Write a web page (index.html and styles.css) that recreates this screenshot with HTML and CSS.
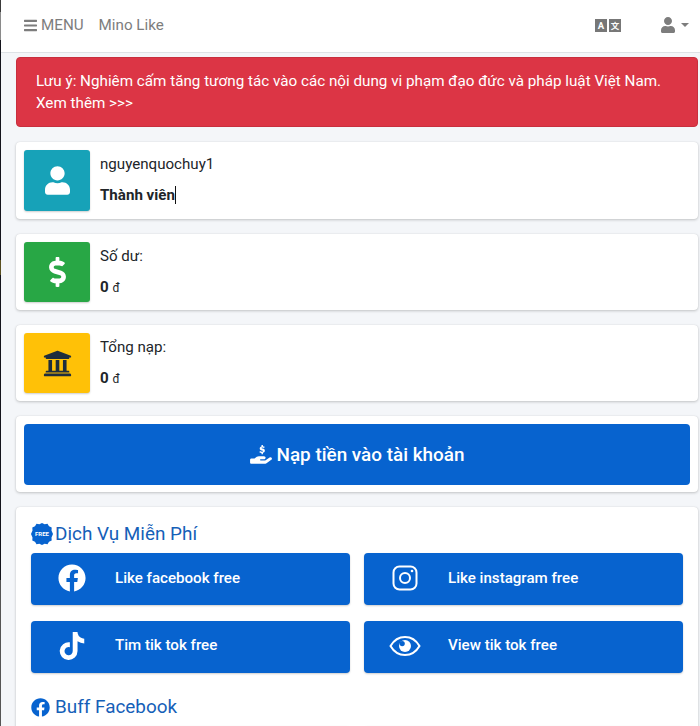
FILE: index.html
```html
<!DOCTYPE html>
<html lang="vi">
<head>
<meta charset="utf-8">
<title>Mino Like</title>
<link rel="stylesheet" href="styles.css">
</head>
<body>
<div class="page">
<nav class="navbar">
  <a class="nav-link menu"><svg class="i-bars" viewBox="0 0 448 512"><path fill="currentColor" d="M16 132h416c8.800 0 16-7.200 16-16V76c0-8.800-7.200-16-16-16H16C7.200 60 0 67.200 0 76v40c0 8.800 7.200 16 16 16zm0 160h416c8.800 0 16-7.200 16-16v-40c0-8.800-7.200-16-16-16H16c-8.800 0-16 7.200-16 16v40c0 8.800 7.200 16 16 16zm0 160h416c8.800 0 16-7.200 16-16v-40c0-8.800-7.200-16-16-16H16c-8.800 0-16 7.200-16 16v40c0 8.800 7.200 16 16 16z"/></svg> MENU</a>
  <a class="nav-link brand">Mino Like</a>
  <span class="spacer"></span>
  <span class="lang" aria-label="Language"><span class="lang-a">A</span><span class="lang-b">文</span></span>
  <a class="user-menu"><svg class="i-user-nav" viewBox="0 0 448 512"><path fill="currentColor" d="M224 256c70.700 0 128-57.300 128-128S294.700 0 224 0 96 57.300 96 128s57.300 128 128 128zm89.600 32h-16.700c-22.200 10.200-46.900 16-72.900 16s-50.600-5.800-72.900-16h-16.700C60.200 288 0 348.200 0 422.400V464c0 26.500 21.500 48 48 48h352c26.500 0 48-21.500 48-48v-41.600c0-74.200-60.200-134.400-134.400-134.400z"/></svg><span class="caret"></span></a>
</nav>
<main class="content">
  <div class="alert">Lưu ý: Nghiêm cấm tăng tương tác vào các nội dung vi phạm đạo đức và pháp luật Việt Nam.<br>Xem thêm &gt;&gt;&gt;</div>

  <section class="info-box">
    <div class="info-icon teal"><svg class="i-user" viewBox="0 0 448 512"><path fill="currentColor" d="M224 256c70.700 0 128-57.300 128-128S294.700 0 224 0 96 57.300 96 128s57.300 128 128 128zm89.600 32h-16.700c-22.200 10.200-46.900 16-72.900 16s-50.600-5.800-72.900-16h-16.700C60.200 288 0 348.200 0 422.400V464c0 26.500 21.500 48 48 48h352c26.500 0 48-21.500 48-48v-41.600c0-74.200-60.200-134.400-134.400-134.400z"/></svg></div>
    <div class="info-text"><span class="label">nguyenquochuy1</span><span class="value role">Thành viên<i class="cursor"></i></span></div>
  </section>

  <section class="info-box">
    <div class="info-icon green"><svg class="i-dollar" viewBox="0 0 288 512"><path fill="currentColor" d="M209.200 233.400l-108-31.600C88.700 198.200 80 186.500 80 173.500c0-16.300 13.200-29.500 29.500-29.500h66.300c12.200 0 24.200 3.700 34.200 10.500 6.100 4.100 14.300 3.100 19.500-2l34.800-34c7.100-6.900 6.100-18.400-1.800-24.500C238 74.800 207.400 64.100 176 64V16c0-8.800-7.200-16-16-16h-32c-8.800 0-16 7.200-16 16v48h-2.500C45.800 64-5.400 118.700.5 183.600c4.200 46.100 39.400 83.600 83.800 96.600l102.500 30c12.500 3.700 21.200 15.300 21.200 28.300 0 16.300-13.200 29.500-29.500 29.500h-66.300C100 368 88 364.300 78 357.500c-6.100-4.100-14.300-3.100-19.500 2l-34.800 34c-7.100 6.900-6.100 18.400 1.800 24.500 24.500 19.200 55.100 29.900 86.500 30v48c0 8.800 7.200 16 16 16h32c8.800 0 16-7.200 16-16v-48.200c46.600-.9 90.300-28.600 105.700-72.700 21.500-61.600-14.600-124.800-72.500-141.700z"/></svg></div>
    <div class="info-text"><span class="label">Số dư:</span><span class="value"><b>0</b> <small>đ</small></span></div>
  </section>

  <section class="info-box">
    <div class="info-icon yellow"><svg class="i-bank" viewBox="0 0 512 512"><path fill="currentColor" d="M496 128v16a8 8 0 0 1-8 8h-24v12c0 6.600-5.400 12-12 12H60c-6.600 0-12-5.400-12-12v-12H24a8 8 0 0 1-8-8v-16a8 8 0 0 1 4.900-7.400l232-88a8 8 0 0 1 6.200 0l232 88A8 8 0 0 1 496 128zm-24 304H40c-13.300 0-24 10.700-24 24v16a8 8 0 0 0 8 8h464a8 8 0 0 0 8-8v-16c0-13.300-10.700-24-24-24zM96 192v192H60c-6.600 0-12 5.400-12 12v20h416v-20c0-6.600-5.400-12-12-12h-36V192h-64v192h-64V192h-64v192h-64V192H96z"/></svg></div>
    <div class="info-text"><span class="label">Tổng nạp:</span><span class="value"><b>0</b> <small>đ</small></span></div>
  </section>

  <section class="card deposit-card">
    <a class="deposit"><svg class="i-hand" viewBox="0 0 32 28"><path fill="currentColor" d="M0 21c0-1.200.8-2 1.800-2h4.400l3.200-2.400c.9-.7 2-1 3-1h7.100c1.300 0 2.300 1 2.300 2.200s-1 2.200-2.300 2.200h-4.700c-.5 0-.9.400-.9.800s.4.800.9.800h6.400l6.100-4.200c1-.7 2.200-.5 2.900.4.700 1 .5 2.300-.5 3l-6.700 4.700c-.9.600-1.900.9-3 .9H1.800C.8 26.400 0 25.500 0 24.400zM16 0h2v1.700c1 .1 1.800.4 2.500.8l-.8 1.800c-.8-.5-1.700-.8-2.500-.8-.6 0-1 .2-1 .6s.4.600 1.600.9c1.800.5 2.900 1.300 2.900 2.900 0 1.500-1 2.500-2.700 2.900V13h-2v-1.700c-1.100-.1-2.200-.5-3-1.100l.9-1.800c.9.600 1.900 1 2.800 1 .8 0 1.200-.2 1.200-.7 0-.4-.4-.6-1.600-1-1.900-.5-2.800-1.300-2.800-2.800 0-1.400 1-2.400 2.500-2.700z"/></svg> Nạp tiền vào tài khoản</a>
  </section>

  <section class="card services">
    <h2 class="section-title"><svg class="i-free" viewBox="0 0 24 24"><path fill="currentColor" d="M12 1l2.600 1.300 2.900-.5 1.500 2.500 2.700 1.200-.2 2.900L23 12l-1.500 3.600.2 2.900-2.700 1.200-1.500 2.500-2.900-.5L12 23l-2.600-1.300-2.900.5L5 19.700l-2.700-1.200.2-2.900L1 12l1.500-3.600-.2-2.900L5 4.300l1.500-2.500 2.900.5z"/><text class="free-text" x="12" y="14.200" text-anchor="middle">FREE</text></svg>Dịch Vụ Miễn Phí</h2>
    <div class="svc-grid">
      <a class="svc"><span class="svc-icon"><svg class="i-28" viewBox="0 0 512 512"><path fill="currentColor" d="M504 256C504 119 393 8 256 8S8 119 8 256c0 123.780 90.690 226.380 209.250 245V327.690h-63V256h63v-54.640c0-62.150 37-96.480 93.670-96.480 27.140 0 55.520 4.840 55.520 4.840v61h-31.280c-30.800 0-40.410 19.120-40.410 38.730V256h68.780l-11 71.690h-57.780V501C413.310 482.380 504 379.780 504 256z"/></svg></span>Like facebook free</a>
      <a class="svc"><span class="svc-icon"><svg class="i-28" viewBox="0 0 28 28"><g fill="none" stroke="currentColor"><rect x="2.500" y="2.500" width="23" height="23" rx="6" stroke-width="2"/><circle cx="14" cy="14" r="5" stroke-width="2"/></g><circle cx="21" cy="7" r="1.300" fill="currentColor"/></svg></span>Like instagram free</a>
      <a class="svc"><span class="svc-icon"><svg class="i-28" viewBox="0 0 448 512"><path fill="currentColor" d="M448 209.910a210.060 210.060 0 0 1-122.770-39.250V349.380A162.550 162.550 0 1 1 185 188.310V278.200a74.620 74.620 0 1 0 52.230 71.180V0l88 0a121.180 121.180 0 0 0 1.860 22.170h0A122.180 122.180 0 0 0 381 102.390a121.430 121.430 0 0 0 67 20.140z"/></svg></span>Tim tik tok free</a>
      <a class="svc"><span class="svc-icon"><svg class="i-eye" viewBox="0 0 32 22"><path fill="none" stroke="currentColor" stroke-width="2" d="M1.500 11C5 5 10 2 16 2s11 3 14.500 9C27 17 22 20 16 20S5 17 1.500 11z"/><circle cx="16" cy="11" r="6" fill="currentColor"/><circle class="eye-notch" cx="13.200" cy="8.600" r="2.600"/></svg></span>View tik tok free</a>
    </div>
    <h2 class="section-title buff"><svg class="i-fb-small" viewBox="0 0 512 512"><path fill="currentColor" d="M504 256C504 119 393 8 256 8S8 119 8 256c0 123.780 90.690 226.380 209.250 245V327.690h-63V256h63v-54.640c0-62.150 37-96.480 93.670-96.480 27.140 0 55.520 4.840 55.520 4.840v61h-31.280c-30.800 0-40.410 19.120-40.410 38.730V256h68.780l-11 71.690h-57.780V501C413.310 482.380 504 379.780 504 256z"/></svg>Buff Facebook</h2>
    <div class="svc-grid"><a class="svc"></a><a class="svc"></a></div>
  </section>
</main>
</div>
</body>
</html>
```
FILE: styles.css
```css
* { box-sizing: border-box; }
html, body { margin: 0; height: 100%; overflow: hidden; }
body {
  font-family: Roboto, "Noto Sans", sans-serif;
  font-size: 15.120px;
  line-height: 21px;
  color: #212529;
  background: #f4f6f9;
}
body::before {
  content: "";
  position: absolute;
  left: 0;
  top: 0;
  width: 1px;
  height: 726px;
  background: linear-gradient(#3a3a3a 0, #3a3a3a 12px, #8a8a8a 12px, #8a8a8a 40px, #14141c 40px, #14141c 260px, #5a5020 260px, #5a5020 275px, #14141c 275px, #14141c 580px, #555 580px, #555 726px);
}
.page { height: 726px; overflow: hidden; }
a { color: inherit; text-decoration: none; }

.navbar {
  display: flex;
  align-items: center;
  height: 53px;
  padding: 0 11px 2px 24px;
  background: #fff;
  border-bottom: 1px solid #dee2e6;
}
.nav-link { color: #7d7d7d; font-size: 15.200px; }
.menu { display: flex; align-items: center; gap: 4px; }
.brand { margin-left: 15px; }
.spacer { flex: 1; }
.i-bars { width: 13px; height: 15px; }
.lang { display: flex; gap: 2px; margin-right: 40px; }
.lang-a, .lang-b {
  display: block;
  width: 12px;
  height: 13px;
  background: #777;
  color: #fff;
  font-size: 9.500px;
  font-weight: 700;
  line-height: 13px;
  text-align: center;
}
.lang-b { font-family: "Noto Sans CJK SC", sans-serif; font-size: 8.500px; }
.user-menu { display: flex; align-items: center; color: #7d7d7d; }
.i-user-nav { width: 14px; height: 16px; }
.caret {
  margin-left: 6px;
  border-top: 4px solid #7d7d7d;
  border-left: 4px solid transparent;
  border-right: 4px solid transparent;
}

.content { padding: 4px 2px 0 16px; }
.alert {
  height: 70px;
  padding: 12px 19px;
  background: #dc3545;
  border: 1px solid #c82f3e;
  border-radius: 4px;
  color: #fff;
  font-size: 15.230px;
  line-height: 22px;
  margin-bottom: 15px;
}

.info-box {
  display: flex;
  height: 77px;
  margin-bottom: 15px;
  padding: 8px;
  background: #fff;
  border-radius: 4px;
  box-shadow: 0 0 1px rgba(0,0,0,.125), 0 1px 3px rgba(0,0,0,.2);
}
.info-box + .info-box { height: 76px; }
.info-icon {
  display: flex;
  align-items: center;
  justify-content: center;
  width: 66px;
  border-radius: 3px;
  box-shadow: 0 1px 2px rgba(0,0,0,.2);
  color: #fff;
}
.teal { background: #17a2b8; }
.green { background: #28a745; }
.yellow { background: #ffc107; color: #1f2d3d; }
.i-user { width: 25px; height: 29px; }
.i-dollar { width: 17px; height: 30px; }
.i-bank { width: 29px; height: 29px; }
.info-text { display: flex; flex-direction: column; padding: 4px 0 0 10px; }
.label { height: 31px; line-height: 21px; }
.value { line-height: 21px; }
.value small { font-size: 12px; }
.role { font-weight: 700; }
.cursor { display: inline-block; width: 1px; height: 18px; background: #111; vertical-align: -4px; }

.card {
  background: #fff;
  border-radius: 4px;
  box-shadow: 0 0 1px rgba(0,0,0,.125), 0 1px 3px rgba(0,0,0,.2);
  margin-bottom: 15px;
}
.deposit-card { padding: 8px; height: 76px; }
.deposit {
  display: flex;
  align-items: center;
  justify-content: center;
  gap: 4px;
  height: 61px;
  background: #0763cf;
  border-radius: 4px;
  color: #fff;
  font-size: 18.900px;
  font-weight: 500;
}
.i-hand { width: 23px; height: 20px; }

.services { padding: 15px 15px 0; height: 260px; }
.section-title {
  display: flex;
  align-items: center;
  margin: 0 0 7px;
  height: 24px;
  color: #1560b8;
  font-size: 18.900px;
  font-weight: 400;
  line-height: 24px;
}
.i-free { width: 24px; height: 24px; margin-right: 1px; flex: none; color: #0763cf; margin-left: -1px; }
.free-text { fill: #fff; font-size: 6px; font-weight: 700; font-family: Roboto, sans-serif; }
.svc-grid {
  display: grid;
  grid-template-columns: 319px 319px;
  column-gap: 14px;
  row-gap: 15.500px;
}
.svc {
  display: flex;
  align-items: center;
  height: 52px;
  padding-bottom: 2px;
  background: #0763cf;
  border-radius: 4px;
  box-shadow: 0 1px 2px rgba(0,0,0,.2);
  color: #fff;
  font-size: 15.120px;
  font-weight: 500;
}
.svc-icon { display: flex; justify-content: center; width: 82px; margin-right: 2px; flex: none; }
.i-28 { width: 28px; height: 28px; }
.i-eye { width: 32px; height: 22px; }
.eye-notch { fill: #0763cf; }
.buff { margin: 22.500px 0 7px; }
.i-fb-small { width: 19px; height: 19px; margin-right: 5px; flex: none; color: #0763cf; }
```
